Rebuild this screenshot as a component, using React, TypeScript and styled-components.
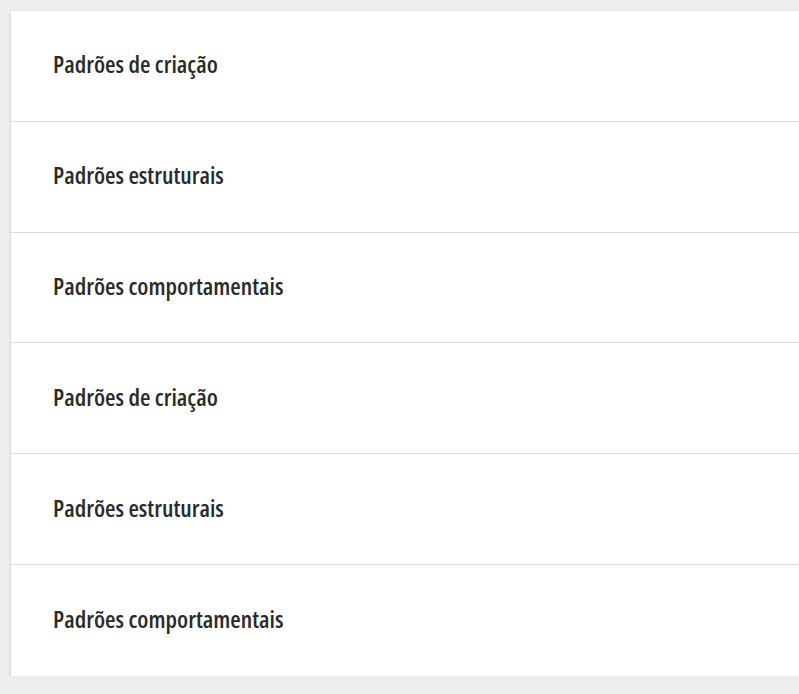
import React from "react";
import styled, { createGlobalStyle } from "styled-components";

const items = [
  "Padrões de criação",
  "Padrões estruturais",
  "Padrões comportamentais",
  "Padrões de criação",
  "Padrões estruturais",
  "Padrões comportamentais",
];

const GlobalStyle = createGlobalStyle`
  html, body {
    margin: 0;
    background: #eeeeee;
    overflow: hidden;
  }
  body {
    padding: 11px 0 0 11px;
    font-family: "Open Sans", "Liberation Sans", sans-serif;
  }
`;

const Card = styled.ul`
  list-style: none;
  margin: 0;
  padding: 0;
  width: 820px;
  background: #fff;
  box-shadow: 0 2px 4px rgba(0, 0, 0, 0.12), 0 0 1px rgba(0, 0, 0, 0.14);
`;

const Row = styled.li<{ $last?: boolean }>`
  display: flex;
  align-items: center;
  height: 110.8px;
  box-sizing: border-box;
  padding-left: 42px;
  padding-bottom: 4px;
  border-bottom: ${(p) => (p.$last ? "none" : "1px solid #dddddd")};
`;

const Label = styled.span`
  font-family: "Open Sans", sans-serif;
  font-stretch: 75%;
  font-weight: 620;
  font-size: 24px;
  color: #2a2a2a;
`;

export default function App() {
  return (
    <>
      <GlobalStyle />
      <Card>
        {items.map((t, i) => (
          <Row key={i} $last={i === items.length - 1}>
            <Label>{t}</Label>
          </Row>
        ))}
      </Card>
    </>
  );
}
